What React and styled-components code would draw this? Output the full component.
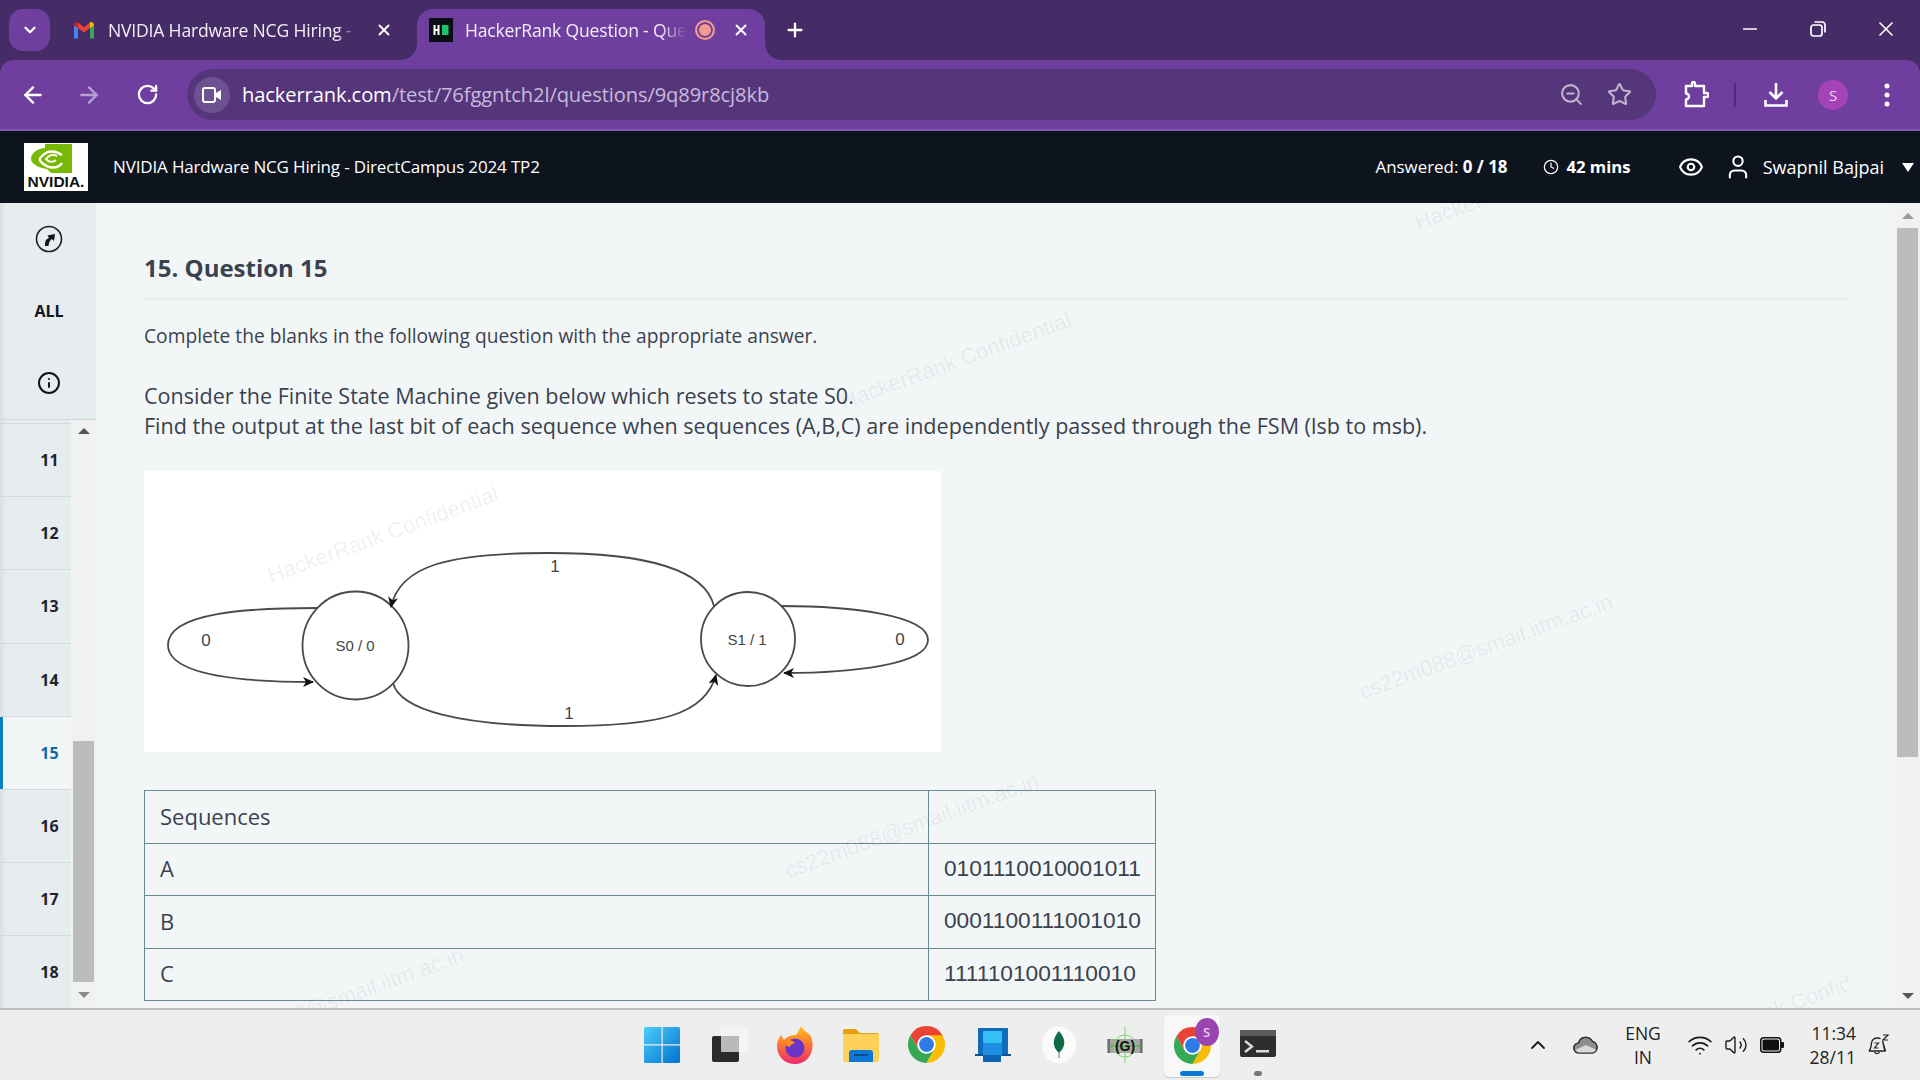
import React from "react";
import styled, { createGlobalStyle } from "styled-components";
import { ArrowLeft, ArrowRight, RotateCw, ZoomOut, Star, X, Plus, Minus, ChevronDown, ChevronUp, Eye, User, Clock, Info, Wifi, Volume2 } from "lucide-react";

const Global = createGlobalStyle`
  html, body { margin: 0; padding: 0; height: 100%; overflow: hidden; }
  body { font-family: "Open Sans", "Noto Sans", sans-serif; }
  * { box-sizing: border-box; }
`;
const Page = styled.div`
  width: 1920px; height: 1080px; display: flex; flex-direction: column; overflow: hidden; background: #452c66;
`;
const TabStrip = styled.div`
  height: 60px; flex: none; display: flex; align-items: flex-start; padding-left: 9px; background: #452c66; color: #fff;
`;
const TabSearch = styled.div`
  width: 41px; height: 42px; margin-top: 9px; border-radius: 14px; background: #6e3f9f; display: flex; align-items: center; justify-content: center;
`;
const Tab = styled.div`
  position: relative; height: 51px; margin-top: 9px; display: flex; align-items: center; flex: none;
  width: ${p => p.$w}px; margin-left: ${p => p.$ml}px; padding: 0 14px 9px ${p => p.$pl}px;
  border-radius: 16px 16px 0 0; background: ${p => (p.$active ? "#6e3f9f" : "transparent")};
  ${p => p.$active && `
    &::before, &::after { content: ""; position: absolute; bottom: 0; width: 16px; height: 16px; background: radial-gradient(circle at var(--c) 0, #452c66 15.5px, #6e3f9f 16px); }
    &::before { left: -16px; --c: 0; }
    &::after { right: -16px; --c: 16px; }
  `}
`;
const TabTitle = styled.span`
  flex: 1; min-width: 0; margin-left: 12px; white-space: nowrap; font-size: 17.6px; letter-spacing: -0.2px; color: #f3eef8;
  -webkit-mask-image: linear-gradient(90deg, #000 ${p => p.$fade}%, transparent 100%);
  mask-image: linear-gradient(90deg, #000 ${p => p.$fade}%, transparent 100%);
`;
const RecDot = styled.span`
  width: 20px; height: 20px; border-radius: 50%; border: 2px solid #f39a8e; background: #f39a8e; box-shadow: inset 0 0 0 2px #6e3f9f; flex: none; margin: 0 16px 0 8px;
`;
const CloseSlot = styled.span`
  width: 20px; display: flex; justify-content: center; flex: none; margin-left: ${p => p.$ml || 0}px;
`;
const NewTab = styled.div`
  margin: 15px 0 0 15px; width: 30px; height: 30px; display: flex; align-items: center; justify-content: center;
`;
const WinControls = styled.div`
  margin-left: auto; display: flex; height: 60px;
`;
const WinButton = styled.div`
  width: 68px; height: 58px; display: flex; align-items: center; justify-content: center;
`;
const Toolbar = styled.div`
  height: 71px; flex: none; display: flex; align-items: center; padding-left: 10px; background: #6e3f9f; border-radius: 14px 14px 0 0; border-bottom: 2px solid #8459ae; color: #fff;
`;
const ToolButton = styled.div`
  width: 46px; height: 46px; flex: none; display: flex; align-items: center; justify-content: center; margin-left: ${p => p.$ml || 0}px; opacity: ${p => p.$dim ? 0.5 : 1};
`;
const Omnibox = styled.div`
  width: 1469px; height: 51px; flex: none; margin-left: 17px; border-radius: 26px; background: #55367a; display: flex; align-items: center; padding-left: 7px;
`;
const SiteChip = styled.div`
  width: 36px; height: 36px; border-radius: 50%; background: #6e5190; display: flex; align-items: center; justify-content: center; flex: none;
`;
const Url = styled.div`
  margin-left: 12px; padding-bottom: 1px; font-size: 20.1px; color: #c9badd; letter-spacing: -0.1px; white-space: nowrap; flex: 1;
  b { font-weight: 400; color: #fff; }
`;
const OmniIcon = styled.div`
  width: 48px; display: flex; justify-content: center; color: #c2b6cf;
`;
const OmniEnd = styled.div`
  display: flex; padding-right: 13px;
`;
const Sep = styled.div`
  width: 2px; height: 24px; margin-left: 15px; background: #4b2e73; flex: none;
`;
const Avatar = styled.div`
  width: 30px; height: 30px; border-radius: 50%; background: #a544b8; color: #f0d8f5; font-size: 15px; display: flex; align-items: center; justify-content: center;
`;
const SiteHeader = styled.header`
  height: 72px; flex: none; display: flex; align-items: center; background: #0d141e; color: #fff;
`;
const LogoBox = styled.div`
  width: 64px; height: 48px; margin-left: 24px; background: #fff; flex: none; display: flex; flex-direction: column; align-items: flex-end; padding: 1px 16px 0 0;
  position: relative;
`;
const LogoWord = styled.span`
  position: absolute; left: 0; right: 0; bottom: 0; font-family: "Liberation Sans", sans-serif; font-weight: 700; font-size: 15.5px; line-height: 18px; height: 18px; color: #111; text-align: center; white-space: nowrap;
`;
const SiteTitle = styled.div`
  margin-left: 25px; padding-bottom: 2px; font-size: 17px; letter-spacing: -0.15px; white-space: nowrap;
`;
const HeaderRight = styled.div`
  margin-left: auto; display: flex; align-items: center; font-size: 16.9px; white-space: nowrap; padding-right: 6px;
  b { font-weight: 700; }
`;
const Meta = styled.div`
  display: flex; align-items: center; margin-right: ${p => p.$mr || 0}px; gap: ${p => p.$gap || 0}px; font-size: ${p => p.$fs || 16.9}px; padding-bottom: 1px;
`;
const Body = styled.div`
  flex: 1; min-height: 0; display: flex; background: #f3f6f7;
`;
const Sidebar = styled.aside`
  width: 96px; flex: none; display: flex; flex-direction: column; background: #e7ecef; box-shadow: inset 7px 0 7px -7px rgba(0,0,0,.12);
`;
const SideTop = styled.div`
  height: 217px; flex: none; border-bottom: 1px solid #cfd6da; padding-left: 2px; display: flex; flex-direction: column; align-items: center; color: #111;
`;
const SideAction = styled.div`
  height: 72px; width: 100%; display: flex; align-items: center; justify-content: center; font-size: 16px; font-weight: 700; color: #10161f;
`;
const SideList = styled.div`
  flex: 1; display: flex; min-height: 0; position: relative;
`;
const Rows = styled.div`
  width: 71px; padding-top: 3px; flex: none; overflow: hidden;
`;
const Row = styled.div`
  height: 73.2px; border-top: 1px solid #d2dadd; display: flex; align-items: center; justify-content: center; font-size: 16px; font-weight: 700;
  padding-left: 28px;
  color: ${p => (p.$active ? "#0e6aa0" : "#1b2430")};
  background: ${p => (p.$active ? "#f3f6f7" : "transparent")};
  box-shadow: ${p => (p.$active ? "inset 3px 0 0 #0b7fc4" : "none")};
`;
const Track = styled.div`
  flex: 1; position: relative; background: #f1f1f1; display: flex; flex-direction: column; align-items: center;
`;
const TrackArrow = styled.div`
  position: absolute; left: 50%; margin-left: -6px; width: 0; height: 0; border-left: 6px solid transparent; border-right: 6px solid transparent;
  ${p => (p.$down ? `bottom: ${p.$off}px; border-top: 6px solid ${p.$c};` : `top: ${p.$off}px; border-bottom: 6px solid ${p.$c};`)}
`;
const Thumb = styled.div`
  position: absolute; left: 2px; right: 2px; background: #bcbcbc; top: ${p => p.$top}px; height: ${p => p.$h}px;
`;
const Main = styled.main`
  flex: 1; min-width: 0; position: relative; overflow: hidden; padding: 49px 47px 0 48px; color: #39424e;
`;
const Heading = styled.h1`
  margin: 0; font-size: 24px; line-height: 32px; font-weight: 700; color: #39424e; padding-bottom: 14px; border-bottom: 2px solid #e8edef;
`;
const Lead = styled.p`
  margin: 23px 0 0; font-size: 19.2px; line-height: 26px; color: #39424e;
`;
const Problem = styled.p`
  margin: 32px 0 0; font-size: 21.55px; line-height: 30px; color: #39424e;
`;
const Figure = styled.div`
  width: 797px; height: 281px; margin-top: 30px; background: #fff;
  svg { display: block; }
`;
const SeqTable = styled.table`
  margin-top: 38px; width: 1011px; border-collapse: collapse; table-layout: fixed; font-size: 22px;
  td { border: 1.5px solid #6a8a94; height: 52.5px; padding: 0 14px 2px 15px; color: #39424e; }
  td:last-child { font-family: "Liberation Sans", sans-serif; font-size: 22.7px; }
`;
const Watermarks = styled.div`
  position: absolute; inset: 0 47px 0 0; overflow: hidden; pointer-events: none;
`;
const Mark = styled.span`
  position: absolute; left: ${p => p.$x}px; top: ${p => p.$y}px; transform: translate(-50%, -50%) rotate(-20deg); font-family: "Liberation Sans", sans-serif; font-size: 22px; color: rgba(30,40,60,.075); white-space: nowrap;
`;
const PageScroll = styled.div`
  width: 25px; flex: none; position: relative; background: #f1f1f1;
`;
const Taskbar = styled.footer`
  height: 72px; flex: none; background: #eeeeee; border-top: 2px solid #bdbdbd; display: grid; grid-template-columns: 1fr auto 1fr; color: #1a1a1a;
`;
const Dock = styled.div`
  grid-column: 2; display: flex; align-items: center; height: 70px;
`;
const DockItem = styled.div`
  width: 66.2px; height: 70px; position: relative; display: flex; align-items: center; justify-content: center; padding-bottom: 1px;
  ${p => p.$active && `
    &::before { content: ""; position: absolute; left: 5px; right: 5px; top: 5px; bottom: 3px; background: #f8f8f8; border-radius: 5px; box-shadow: 0 1px 1px rgba(0,0,0,.16); }
    & > * { position: relative; }
  `}
`;
const RunBar = styled.span`
  position: absolute !important; left: 50%; bottom: 4px; margin-left: -12px; width: 24px; height: 5px; background: #0a78d4; border-radius: 3px;
`;
const RunDot = styled.span`
  position: absolute; left: 50%; bottom: 4px; margin-left: -4px; width: 8px; height: 5px; background: #777; border-radius: 3px;
`;
const ProfileBadge = styled.span`
  position: absolute; top: -9px; right: -9px; width: 24px; height: 28px; border-radius: 50%; background: #9a46b0; color: #e8c9f0; font-size: 13px; font-weight: 600; display: flex; align-items: center; justify-content: center;
`;
const ChromeWrap = styled.span`
  position: relative; display: block; width: 36px; height: 36px;
`;
const Tray = styled.div`
  grid-column: 3; display: flex; justify-content: flex-end; align-items: center; padding-right: 20px; height: 70px;
`;
const TrayItem = styled.div`
  width: ${p => p.$w}px; display: flex; align-items: center; justify-content: center;
`;
const TrayText = styled.div`
  width: ${p => p.$w}px; text-align: ${p => p.$align}; font-size: 17.5px; line-height: 24px; color: #222;
`;

const ChromeIcon = ({ size = 37 }) => (
  <svg width={size} height={size} viewBox="4 4 40 40">
    <path d="M24 4A20 20 0 0 0 6.68 14L15.34 29 24 24 41.32 14A20 20 0 0 0 24 4Z" fill="#ea4335" />
    <path d="M6.68 14A20 20 0 0 0 24 44L32.66 29H15.34Z" fill="#34a853" />
    <path d="M41.32 14H24L32.66 29 24 44A20 20 0 0 0 41.32 14Z" fill="#fbbc04" />
    <circle cx="24" cy="24" r="10" fill="#fff" />
    <circle cx="24" cy="24" r="8" fill="#2f7ae5" />
  </svg>
);
const Gmail = () => (
  <svg width="24" height="24" viewBox="0 0 24 24" style={{ flex: "none" }}>
    <path d="M2 20.5h4V10L2 7z" fill="#4285f4" />
    <path d="M18 20.5h4V7l-4 3z" fill="#34a853" />
    <path d="M6 10V4.5l6 4.7 6-4.7V10l-6 4.5z" fill="#ea4335" />
    <path d="M2 7.5C2 5 4.5 3.3 6 4.5V10z" fill="#c5221f" />
    <path d="M18 4.5C19.5 3.3 22 5 22 7.5L18 10z" fill="#fbbc04" />
  </svg>
);
const HackerFav = () => (
  <svg width="24" height="24" viewBox="0 0 24 24" style={{ flex: "none" }}>
    <rect width="24" height="24" fill="#0b0f14" />
    <path d="M4.5 7h2v4h2V7h2v10h-2v-4h-2v4h-2z" fill="#fff" />
    <rect x="13" y="7" width="6.5" height="10" fill="#1fc36b" />
  </svg>
);
const Restore = () => (
  <svg width="18" height="18" viewBox="0 0 18 18" fill="none" stroke="#fff" strokeWidth="1.7">
    <rect x="2" y="5" width="11" height="11" rx="2.5" />
    <path d="M5.5 2h7.5A3 3 0 0 1 16 5v7.5" />
  </svg>
);
const CameraIcon = () => (
  <svg width="20" height="18" viewBox="0 0 20 18" fill="none" stroke="#fff" strokeWidth="2">
    <rect x="1" y="2" width="12" height="14" rx="2" />
    <path d="M14 7l5-3v10l-5-3z" fill="#fff" stroke="none" />
  </svg>
);
const PuzzleIcon = () => (
  <svg width="26" height="28" viewBox="0 0 26 28" fill="none" stroke="#fff" strokeWidth="2.4" strokeLinejoin="round">
    <path d="M3 5h6V2.5a1.5 1.5 0 0 1 3 0V5h9v7h2.5a2 2 0 0 1 0 4H21v9H3v-6.5a3 3 0 0 0 0-6z" />
  </svg>
);
const DownloadTray = () => (
  <svg width="26" height="28" viewBox="0 0 26 28" fill="none" stroke="#fff" strokeWidth="2.6">
    <path d="M13 2v15M6.5 11l6.5 6.5L19.5 11" />
    <path d="M2.5 19v5.5h21V19" />
  </svg>
);
const VDots = () => (
  <svg width="6" height="24" viewBox="0 0 6 24" fill="#fff">
    <circle cx="3" cy="3" r="2.5" /><circle cx="3" cy="12" r="2.5" /><circle cx="3" cy="21" r="2.5" />
  </svg>
);
const NvidiaEye = () => (
  <svg width="41" height="29" viewBox="0 0 41 29">
    <path d="M14 0h27v29H20l-4-4C8 24 0 20 0 15 0 9 7 4 14 4z" fill="#76b900" />
    <path d="M31 19C27 25 18 25 11 19c-3-3-3-4 0-7 5-5 12-6 20-1" fill="none" stroke="#fff" strokeWidth="2.4" />
    <path d="M25 16c-3 3-8 2-10-1 3-4 7-5 11-3" fill="none" stroke="#fff" strokeWidth="2" />
  </svg>
);
const CompassIcon = () => (
  <svg width="28" height="28" viewBox="0 0 28 28" fill="none">
    <circle cx="14" cy="14" r="12.5" stroke="#1a222c" strokeWidth="1.6" />
    <path d="M10 21c0-5 1-7 4-8l-1.5-2.5L20 9l-1 7-2-2c-2 1-3 3-3.5 7z" fill="#10161f" />
  </svg>
);
const CaretDown = () => (
  <svg width="12" height="9" viewBox="0 0 12 9" style={{ marginLeft: 18 }}>
    <path d="M0 0h12L6 9z" fill="#fff" />
  </svg>
);
const WinLogo = () => (
  <svg width="36" height="36" viewBox="0 0 36 36">
    <defs><linearGradient id="wl" x1="0" y1="0" x2="1" y2="1"><stop offset="0" stopColor="#4fcbfa" /><stop offset="1" stopColor="#0072d0" /></linearGradient></defs>
    <path d="M0 1.5A1.5 1.5 0 0 1 1.5 0h16v17.3H0zM18.7 0h15.8A1.5 1.5 0 0 1 36 1.5v15.8H18.7zM0 18.6h17.5V36h-16A1.5 1.5 0 0 1 0 34.5zM18.7 18.6H36v15.9a1.5 1.5 0 0 1-1.5 1.5H18.7z" fill="url(#wl)" />
  </svg>
);
const TaskView = () => (
  <svg width="36" height="36" viewBox="0 0 36 36" style={{ marginLeft: 3 }}>
    <rect x="0" y="9" width="27" height="26" rx="2" fill="#2a2a2a" />
    <rect x="9" y="0" width="27" height="25" rx="2" fill="#f4f4f4" />
    <rect x="9" y="9" width="18" height="16" fill="#b9b9b9" />
  </svg>
);
const Firefox = () => (
  <svg width="36" height="38" viewBox="0 0 36 38">
    <defs><linearGradient id="ff" x1="0.5" y1="0" x2="0.5" y2="1"><stop offset="0" stopColor="#ffc21f" /><stop offset=".45" stopColor="#ff7a30" /><stop offset="1" stopColor="#ee2a6e" /></linearGradient></defs>
    <path d="M24 0c2 4 6 6 9 9 3 5 3 11 2 15-2 9-9 14-17 14C8 38 0 31 0 20 0 15 2 11 5 9c0 2 1 4 2 5 3-4 8-5 12-5 2-3 4-6 5-9z" fill="url(#ff)" />
    <circle cx="18" cy="22" r="9.5" fill="#6b34c8" />
    <path d="M7 14c4-1 9 0 11 3-3 1-5 2-5 4-3 0-6-3-6-7z" fill="#ff8a1f" />
  </svg>
);
const Folder = () => (
  <svg width="36" height="34" viewBox="0 0 36 34">
    <path d="M0 3a2 2 0 0 1 2-2h11l4 4h17a2 2 0 0 1 2 2v4H0z" fill="#e6a00f" />
    <path d="M0 6h36v26a2 2 0 0 1-2 2H2a2 2 0 0 1-2-2z" fill="#ffd15a" />
    <path d="M6 34V25a3 3 0 0 1 3-3h18a3 3 0 0 1 3 3v9z" fill="#0a78d4" />
    <rect x="11" y="26" width="14" height="2" fill="#064f8f" />
  </svg>
);
const BlueApp = () => (
  <svg width="36" height="34" viewBox="0 0 36 34">
    <path d="M3 0h30v27H3z" fill="#0f6cbd" />
    <rect x="0" y="26" width="36" height="2" fill="#0a4f8e" />
    <rect x="8" y="3" width="19" height="12" rx="1" fill="#35c0f5" />
    <rect x="8" y="15" width="19" height="13" fill="#1e8fe0" />
    <rect x="8" y="27" width="18" height="7" fill="#0a66b5" />
  </svg>
);
const Mongo = () => (
  <svg width="36" height="38" viewBox="0 0 36 38">
    <ellipse cx="18" cy="19" rx="17" ry="18.5" fill="#fbfbfb" />
    <path d="M18 5c4 5 6 9 5 14-1 4-3 6-5 8-2-2-4-4-5-8-1-5 1-9 5-14z" fill="#0f6b45" />
    <rect x="17.3" y="26" width="1.4" height="6" fill="#8f9d93" />
  </svg>
);
const KgApp = () => (
  <svg width="36" height="36" viewBox="0 0 36 36">
    <rect x="0" y="12" width="36" height="14" fill="#a6a6a6" />
    <path d="M2 12v14M34 12v14M0 19h36" stroke="#333" strokeWidth="1" />
    <circle cx="18" cy="19" r="11" fill="none" stroke="#79d86a" strokeWidth="1" />
    <path d="M18 0v36M0 19h36" stroke="#79d86a" strokeWidth="1" />
    <text x="18" y="24" textAnchor="middle" fontSize="14" fontWeight="700" fontFamily="Liberation Sans" fill="#111">(G)</text>
  </svg>
);
const Terminal = () => (
  <svg width="36" height="30" viewBox="0 0 36 30">
    <rect width="36" height="27" rx="2" y="0" fill="#2e2e2e" />
    <rect width="36" height="6" fill="#5a5a5a" />
    <path d="M5 11l7 5.5-7 5.5" fill="none" stroke="#dcdcdc" strokeWidth="2.4" />
    <rect x="16" y="20" width="13" height="2.5" fill="#dcdcdc" />
  </svg>
);
const CloudIcon = () => (
  <svg width="26" height="18" viewBox="0 0 26 18">
    <path d="M6 17a5 5 0 0 1-.5-10 7.5 7.5 0 0 1 14-1.5A6 6 0 0 1 20 17z" fill="#8e8e8e" stroke="#333" strokeWidth="1.2" />
    <path d="M2 14l11-5 11 5-2 3H5z" fill="#d9d9d9" />
    <path d="M6 17a5 5 0 0 1-.5-10 7.5 7.5 0 0 1 14-1.5A6 6 0 0 1 20 17z" fill="none" stroke="#333" strokeWidth="1.2" />
  </svg>
);
const BatteryIcon = () => (
  <svg width="24" height="16" viewBox="0 0 24 16">
    <rect x="0.75" y="0.75" width="20" height="14.5" rx="3" fill="none" stroke="#111" strokeWidth="1.5" />
    <rect x="2.5" y="2.5" width="16.5" height="11" rx="1.5" fill="#111" />
    <rect x="21" y="5" width="3" height="6" rx="1" fill="#111" />
  </svg>
);
const SnoozeBell = () => (
  <svg width="24" height="24" viewBox="0 0 24 24" fill="none" stroke="#222" strokeWidth="1.3">
    <path d="M3 18c2-2 2-4 2.5-8 .5-3 3-5 6-5 1 0 2 .2 3 .8M16.5 8c1 2 .5 7 3 10z" />
    <path d="M3 18h16.5M8.5 19a2.8 2.8 0 0 0 5 0" />
    <path d="M8.5 10h4l-4 5h4M17 2h5l-5 5h5" strokeWidth="1.2" />
  </svg>
);

const FsmDiagram = () => (
  <svg width="797" height="281" viewBox="144 471 797 281">
    <defs>
      <marker id="arrow" markerWidth="12" markerHeight="12" refX="10" refY="5" orient="auto" markerUnits="userSpaceOnUse">
        <path d="M0 0L11 5 0 10 3 5z" fill="#111" />
      </marker>
    </defs>
    <g fill="none" stroke="#4a4a4a" strokeWidth="1.8">
      <ellipse cx="355.5" cy="645.5" rx="53" ry="54" fill="#fff" />
      <ellipse cx="748" cy="639" rx="47" ry="47" fill="#fff" />
      <path d="M714 606C705 570 650 553 548 553 450 553 400 565 391 607" markerEnd="url(#arrow)" />
      <path d="M393 683C400 710 460 726 564 726 660 726 705 715 716 675" markerEnd="url(#arrow)" />
      <path d="M317 608C250 608 168 612 168 645 168 675 240 682 313 682" markerEnd="url(#arrow)" />
      <path d="M781 606C850 606 928 615 928 640 928 665 850 673 784 673" markerEnd="url(#arrow)" />
    </g>
    <g fontFamily="Liberation Sans, sans-serif" fill="#444" textAnchor="middle">
      <text x="555" y="572" fontSize="17">1</text>
      <text x="569" y="719" fontSize="17">1</text>
      <text x="206" y="646" fontSize="17">0</text>
      <text x="900" y="645" fontSize="17">0</text>
      <text x="355" y="651" fontSize="15">S0 / 0</text>
      <text x="747" y="645" fontSize="15">S1 / 1</text>
    </g>
  </svg>
);

const rows = [11, 12, 13, 14, 15, 16, 17, 18];
const sequences = [["Sequences", ""], ["A", "0101110010001011"], ["B", "0001100111001010"], ["C", "1111101001110010"]];
const marks = [
  ["HackerRank Confidential", 1434, -21],
  ["HackerRank Confidential", 860, 158],
  ["HackerRank Confidential", 287, 332],
  ["cs22m088@smail.iitm.ac.in", 1390, 444],
  ["cs22m088@smail.iitm.ac.in", 816, 623],
  ["cs22m088@smail.iitm.ac.in", 241, 797],
  ["HackerRank Confidential", 1690, 803],
];

export default function App() {
  return (
    <Page>
      <Global />
      <TabStrip>
        <TabSearch><ChevronDown size={18} strokeWidth={3} /></TabSearch>
        <Tab $w={348} $ml={10} $pl={12}>
          <Gmail />
          <TabTitle $fade={92}>NVIDIA Hardware NCG Hiring -</TabTitle>
          <CloseSlot $ml={17}><X size={18} strokeWidth={2.5} /></CloseSlot>
        </Tab>
        <Tab $active $w={348} $ml={9} $pl={12}>
          <HackerFav />
          <TabTitle $fade={88}>HackerRank Question - Que</TabTitle>
          <RecDot />
          <CloseSlot><X size={18} strokeWidth={2.5} /></CloseSlot>
        </Tab>
        <NewTab><Plus size={22} strokeWidth={2.5} /></NewTab>
        <WinControls>
          <WinButton><Minus size={22} strokeWidth={1.6} /></WinButton>
          <WinButton><Restore /></WinButton>
          <WinButton><X size={24} strokeWidth={1.6} /></WinButton>
        </WinControls>
      </TabStrip>
      <Toolbar>
        <ToolButton><ArrowLeft size={26} strokeWidth={2.2} /></ToolButton>
        <ToolButton $ml={10} $dim><ArrowRight size={26} strokeWidth={2.2} /></ToolButton>
        <ToolButton $ml={12}><RotateCw size={23} strokeWidth={2.4} /></ToolButton>
        <Omnibox>
          <SiteChip><CameraIcon /></SiteChip>
          <Url><b>hackerrank.com</b>/test/76fggntch2l/questions/9q89r8cj8kb</Url>
          <OmniEnd>
            <OmniIcon><ZoomOut size={25} strokeWidth={2} /></OmniIcon>
            <OmniIcon><Star size={25} strokeWidth={2} /></OmniIcon>
          </OmniEnd>
        </Omnibox>
        <ToolButton $ml={17}><PuzzleIcon /></ToolButton>
        <Sep />
        <ToolButton $ml={17}><DownloadTray /></ToolButton>
        <ToolButton $ml={11}><Avatar>S</Avatar></ToolButton>
        <ToolButton $ml={8}><VDots /></ToolButton>
      </Toolbar>
      <SiteHeader>
        <LogoBox>
          <NvidiaEye />
          <LogoWord>NVIDIA.</LogoWord>
        </LogoBox>
        <SiteTitle>NVIDIA Hardware NCG Hiring - DirectCampus 2024 TP2</SiteTitle>
        <HeaderRight>
          <Meta $mr={36}><span>Answered:&nbsp;<b>0 / 18</b></span></Meta>
          <Meta $mr={47} $gap={7} $fs={16.7}><Clock size={16} strokeWidth={1.8} /><b>42 mins</b></Meta>
          <Meta $mr={20}><Eye size={26} strokeWidth={2} /></Meta>
          <Meta $gap={11} $fs={18}><User size={28} strokeWidth={1.8} /><span>Swapnil Bajpai</span></Meta>
          <CaretDown />
        </HeaderRight>
      </SiteHeader>
      <Body>
        <Sidebar>
          <SideTop>
            <SideAction><CompassIcon /></SideAction>
            <SideAction>ALL</SideAction>
            <SideAction><Info size={24} strokeWidth={2} /></SideAction>
          </SideTop>
          <SideList>
            <Rows>
              {rows.map(n => <Row key={n} $active={n === 15}>{n}</Row>)}
            </Rows>
            <Track>
              <TrackArrow $off={8} $c="#555" />
              <Thumb $top={321} $h={241} />
              <TrackArrow $down $off={10} $c="#8a8a8a" />
            </Track>
          </SideList>
        </Sidebar>
        <Main>
          <Heading>15. Question 15</Heading>
          <Lead>Complete the blanks in the following question with the appropriate answer.</Lead>
          <Problem>
            Consider the Finite State Machine given below which resets to state S0.<br />
            Find the output at the last bit of each sequence when sequences (A,B,C) are independently passed through the FSM (lsb to msb).
          </Problem>
          <Figure><FsmDiagram /></Figure>
          <SeqTable>
            <colgroup><col style={{ width: 784 }} /><col style={{ width: 227 }} /></colgroup>
            <tbody>
              {sequences.map(([a, b]) => <tr key={a}><td>{a}</td><td>{b}</td></tr>)}
            </tbody>
          </SeqTable>
          <Watermarks>
            {marks.map(([t, x, y], i) => <Mark key={i} $x={x} $y={y}>{t}</Mark>)}
          </Watermarks>
        </Main>
        <PageScroll>
          <TrackArrow $off={10} $c="#9a9a9a" />
          <Thumb $top={25} $h={529} />
          <TrackArrow $down $off={9} $c="#555" />
        </PageScroll>
      </Body>
      <Taskbar>
        <Dock>
          <DockItem><WinLogo /></DockItem>
          <DockItem><TaskView /></DockItem>
          <DockItem><Firefox /></DockItem>
          <DockItem><Folder /></DockItem>
          <DockItem><ChromeIcon /></DockItem>
          <DockItem><BlueApp /></DockItem>
          <DockItem><Mongo /></DockItem>
          <DockItem><KgApp /></DockItem>
          <DockItem $active>
            <ChromeWrap><ChromeIcon /><ProfileBadge>S</ProfileBadge></ChromeWrap>
            <RunBar />
          </DockItem>
          <DockItem><Terminal /><RunDot /></DockItem>
        </Dock>
        <Tray>
          <TrayItem $w={48}><ChevronUp size={24} strokeWidth={1.8} /></TrayItem>
          <TrayItem $w={48}><CloudIcon /></TrayItem>
          <TrayText $w={66} $align="center">ENG<br />IN</TrayText>
          <TrayItem $w={48}><Wifi size={26} strokeWidth={1.6} /></TrayItem>
          <TrayItem $w={24}><Volume2 size={26} strokeWidth={1.4} /></TrayItem>
          <TrayItem $w={48}><BatteryIcon /></TrayItem>
          <TrayText $w={60} $align="right">11:34<br />28/11</TrayText>
          <TrayItem $w={44}><SnoozeBell /></TrayItem>
        </Tray>
      </Taskbar>
    </Page>
  );
}
